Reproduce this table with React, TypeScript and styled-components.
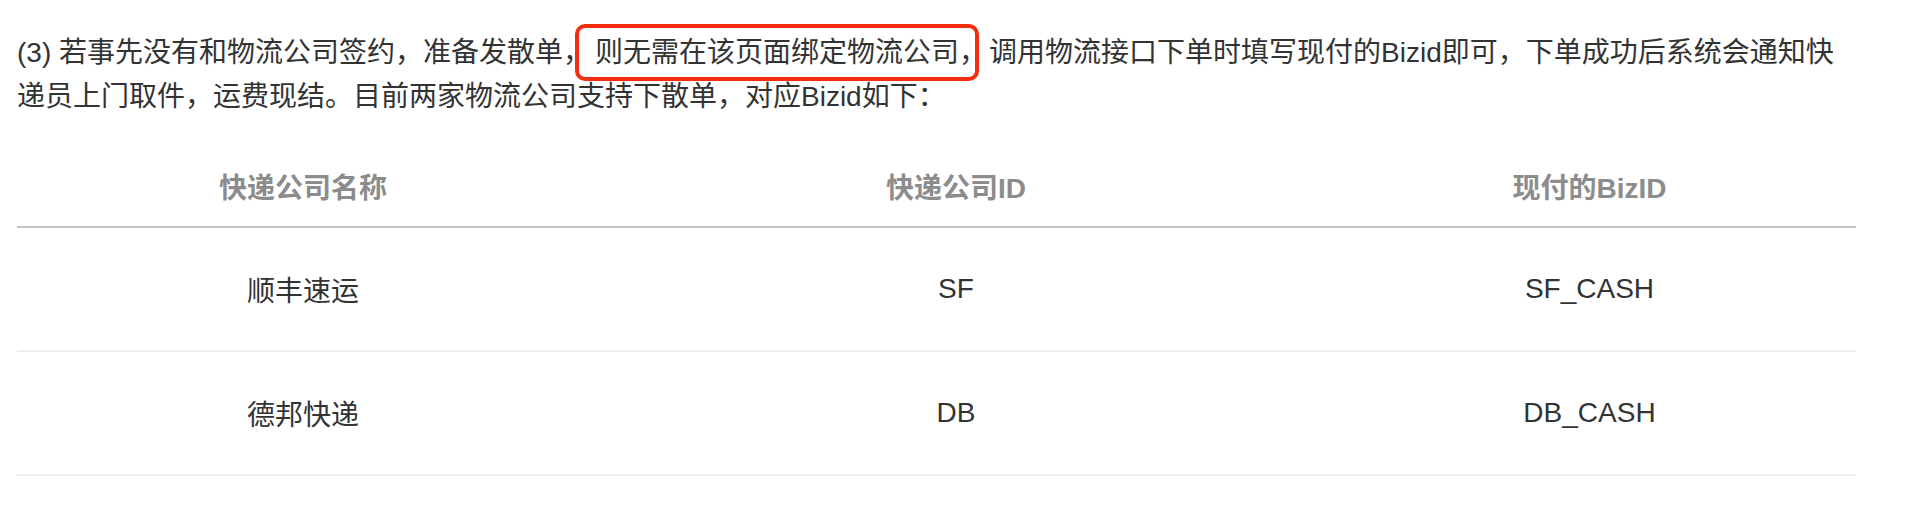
import React from "react";
import styled, { createGlobalStyle } from "styled-components";

const GlobalStyle = createGlobalStyle`
	html, body {
		margin: 0;
		padding: 0;
		background: #fff;
	}
	body {
		font-family: "Liberation Sans", "Noto Sans CJK SC", sans-serif;
		color: #333;
	}
`;

type Carrier = { name: string; code: string; bizId: string };

const carriers: Carrier[] = [
	{ name: "顺丰速运", code: "SF", bizId: "SF_CASH" },
	{ name: "德邦快递", code: "DB", bizId: "DB_CASH" },
];

const App: React.FC = () => {
	return (
		<Page>
			<GlobalStyle />
			<Paragraph>
				(3) 若事先没有和物流公司签约，准备发散单，
				<Highlight>
					则无需在该页面绑定物流公司<Tight>，</Tight>
				</Highlight>
				调用物流接口下单时填写现付的Bizid即可，下单成功后系统会通知快递员上门取件，运费现结。目前两家物流公司支持下散单，对应Bizid如下：
			</Paragraph>
			<Table>
				<colgroup>
					<col style={{ width: 572 }} />
					<col style={{ width: 734 }} />
					<col />
				</colgroup>
				<thead>
					<tr>
						<HeadCell>快递公司名称</HeadCell>
						<HeadCell>快递公司ID</HeadCell>
						<HeadCell>现付的BizID</HeadCell>
					</tr>
				</thead>
				<tbody>
					{carriers.map((c) => (
						<Row key={c.code}>
							<Cell>{c.name}</Cell>
							<Cell>{c.code}</Cell>
							<Cell>{c.bizId}</Cell>
						</Row>
					))}
				</tbody>
			</Table>
		</Page>
	);
};

export default App;

const Page = styled.div`
	width: 1839px;
	padding: 31px 0 0 17px;
`;

const Paragraph = styled.p`
	margin: 0;
	font-size: 28px;
	line-height: 44px;
	color: #333;
`;

// red marker box around the key phrase; the comma before it is tucked in
const Highlight = styled.span`
	padding: 9px 0 9px 16px;
	margin: 0 10px 0 -16px;
	border: 4px solid #f52d0f;
	border-radius: 10px;
`;

// full-width comma with its trailing blank trimmed
const Tight = styled.span`
	margin-right: -12px;
`;

const Table = styled.table`
	width: 1839px;
	margin-top: 27px;
	border-collapse: collapse;
	table-layout: fixed;
	font-size: 28px;
`;

const HeadCell = styled.th`
	height: 80px;
	padding: 0;
	text-align: center;
	vertical-align: middle;
	font-weight: 600;
	color: #8c8c8c;
	border-bottom: 2px solid #c4c4c4;
`;

const Row = styled.tr`
	border-bottom: 2px solid #f0f0f0;
`;

const Cell = styled.td`
	height: 122px;
	padding: 0;
	text-align: center;
	vertical-align: middle;
	color: #333;
`;
